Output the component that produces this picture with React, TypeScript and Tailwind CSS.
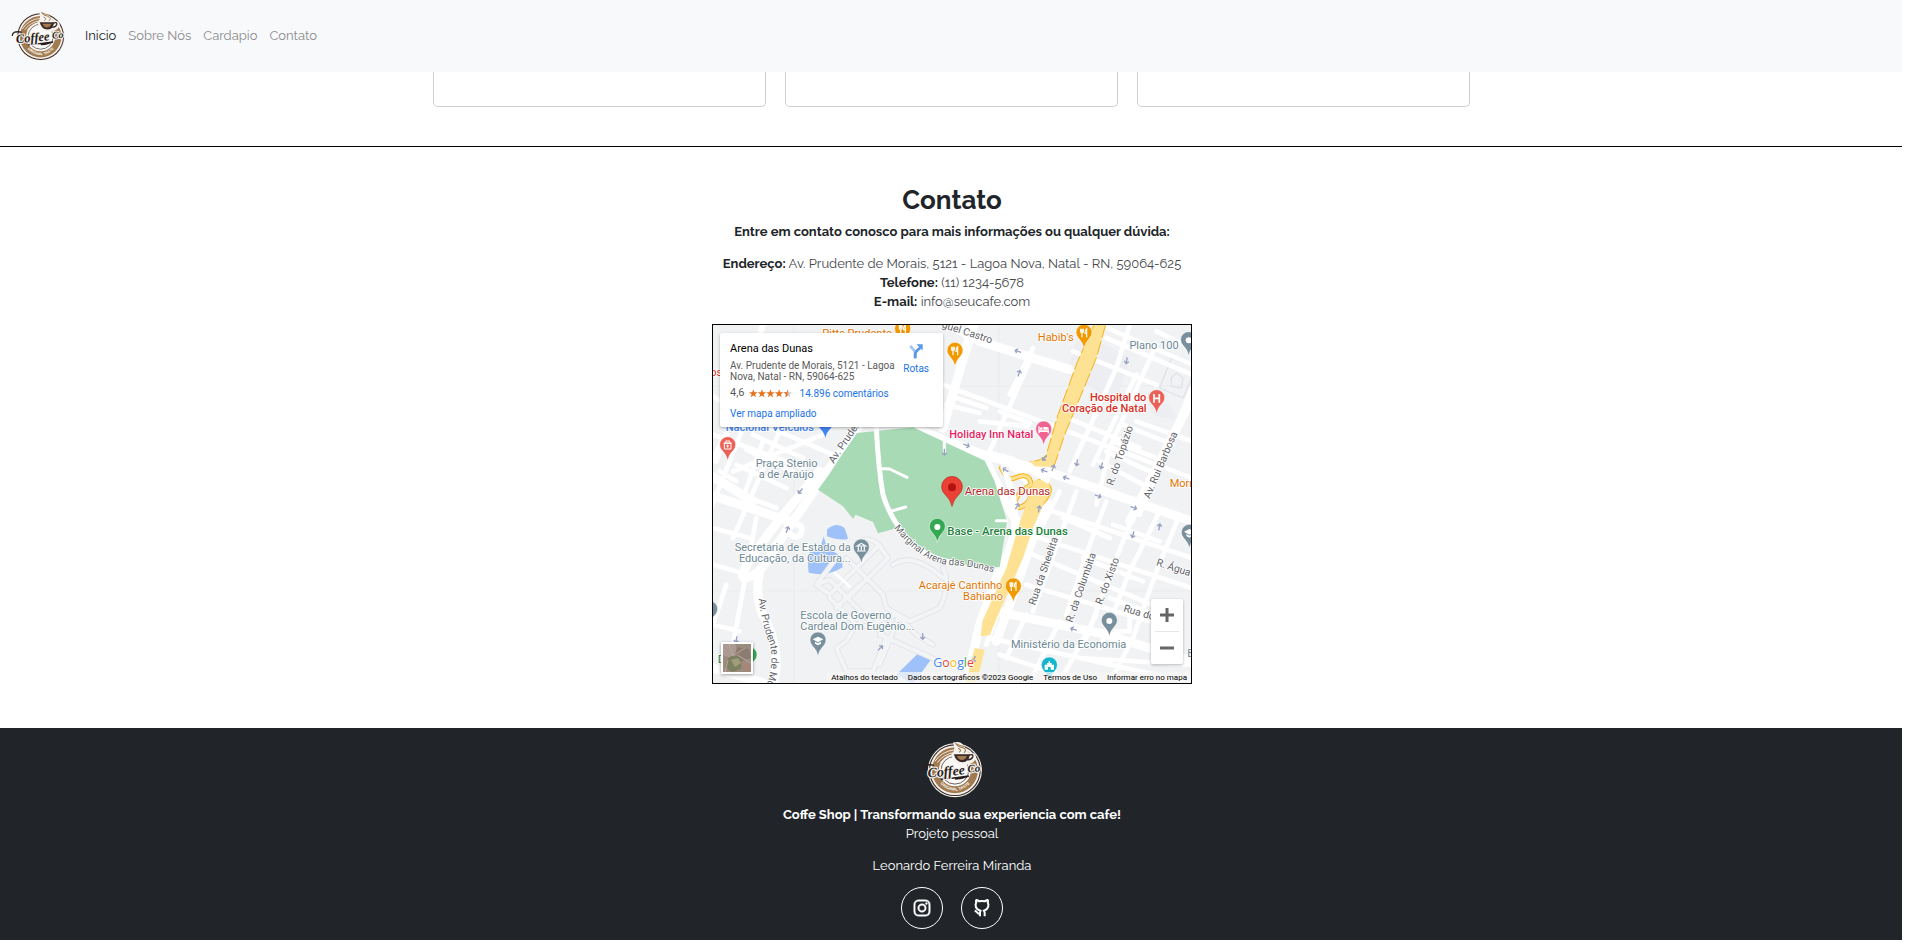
import { BiLogoInstagram } from "react-icons/bi";

const green = "#a8dab5";
const slate = "#6d8793";

function Logo({ className }: { className: string }) {
  return (
    <svg viewBox="28 30 170 156" className={className} role="img" aria-label="Coffee Co">
      <circle cx="121" cy="110" r="74" fill="#f6f3ef" />
      <circle cx="121" cy="110" r="71" fill="#3a2a26" />
      <circle cx="121" cy="110" r="68" fill="#f6f3ef" />
      <circle cx="121" cy="110" r="63" fill="#a17a50" />
      <circle cx="121" cy="110" r="44" fill="#fbfaf8" />
      <circle cx="121" cy="110" r="38" fill="none" stroke="#3a2a26" strokeWidth="2" />
      <g fill="none" stroke="#f6f3ef" strokeWidth="2.5">
        <path d="M66 86Q84 58 121 54" />
        <path d="M73 89Q89 66 121 61" />
        <path d="M80 91Q94 73 119 68" />
      </g>
      <path d="M116 34Q138 28 146 44Q152 56 160 62Q182 60 178 78Q172 92 156 94H128Q112 82 112 64Q124 58 116 34z" fill="#f6f3ef" />
      <path d="M118 66h44q-2 21-20 22-18 0-24-22z" fill="#3a2a26" />
      <path d="M126 71h28q-4 11-14 11-9 0-14-11z" fill="#a17a50" />
      <path d="M159 69q13-5 11 4-3 9-15 8" fill="none" stroke="#3a2a26" strokeWidth="4" />
      <path d="M146 62q10-9-4-14-15-3-18-11 14 8 24 8M132 61q10-5-2-11" fill="none" stroke="#a17a50" strokeWidth="3" />
      <path d="M35 106q1-14 27-10M84 135q42-4 75-9-20 8-36 8" fill="none" stroke="#2b1d1b" strokeWidth="4" strokeLinecap="round" />
      <text transform="rotate(-5 49 130)" fontFamily="'Liberation Serif', serif" fontWeight="700" fontStyle="italic" fill="#2b1d1b" stroke="#f6f3ef" strokeWidth="6" strokeLinejoin="round" paintOrder="stroke">
        <tspan x="47" y="130" fontSize="38">Coffee</tspan>
        <tspan x="157" y="126" fontSize="30">Co</tspan>
      </text>
      <path id="taste" d="M69 135q52 62 105 0" fill="none" />
      <text fontFamily="'Liberation Sans', sans-serif" fontSize="11" fontWeight="700" fill="#fff" textAnchor="middle">
        <textPath href="#taste" startOffset="50%">ORIGINAL TASTE</textPath>
      </text>
    </svg>
  );
}

function GithubIcon({ className }: { className: string }) {
  return (
    <svg viewBox="0 0 48 54" className={className} fill="none" stroke="currentColor" strokeWidth="6" strokeLinejoin="round" aria-hidden="true">
      <path d="M18 52V40Q19 36 20 35Q4 31 5 17Q5 13 7 11Q5 6 7 3Q12 4 16 7Q24 5 32 7Q36 4 41 3Q43 6 41 11Q43 13 43 17Q44 31 29 35Q32 38 32 42V52" />
      <path d="M2 35Q7 36 9 40Q12 45 18 44" />
    </svg>
  );
}

type PinProps = { x: number; y: number; color: string; kind: string };

/* x and y give the centre of the pin's head */
function Pin({ x, y, color, kind }: PinProps) {
  return (
    <g transform={`translate(${x} ${y})`}>
      <path d="M0 46Q-3 29-17 15A24 24 0 1 1 17 15Q3 29 0 46z" fill={color} stroke="#fff" strokeWidth="1.5" />
      {kind === "food" && (
        <path d="M-10-13v8q0 5 4 5v13M-6-13v10M-2-13v8q0 5-4 5M8 13V-13q-6 4-5 14h5" fill="none" stroke="#fff" strokeWidth="3.5" />
      )}
      {kind === "dot" && <circle r="9" fill="#fff" />}
      {kind === "hospital" && <path d="M-8-13v26M8-13v26M-8 0H8" stroke="#fff" strokeWidth="5" />}
      {kind === "bed" && (
        <g fill="#fff">
          <path d="M-16-10h4V2h28v9h-4V7h-24v4h-4z" />
          <circle cx="-7" cy="-3" r="4" />
          <path d="M-1-8h11q6 0 6 8H-1z" />
        </g>
      )}
      {kind === "museum" && <path d="M-13-5L0-13 13-5zM-9-3v11M0-3v11M9-3v11M-13 10h26" fill="none" stroke="#fff" strokeWidth="3.5" />}
      {kind === "school" && (
        <g fill="#fff">
          <path d="M-16-4L0-12 16-4 0 5z" />
          <path d="M-9 3L0 8 9 3v6L0 14l-9-5z" />
        </g>
      )}
      {kind === "bag" && (
        <path d="M-10-6h20v17h-20zM-12-7h24M-6-8v-5h12v5M0-2v9M-4 2h8" fill="none" stroke="#fff" strokeWidth="3" />
      )}
      {kind === "church" && (
        <path d="M-14 12V-3h7v-5h5v-6h4v6h5v5h7v15H4V4h-8v8z" fill="#fff" />
      )}
    </g>
  );
}

const minorRoads =
  "M0 215L130 290M0 330L270 430M60 440L330 330M150 300L430 420M90 310L-10 560M200 320L60 640M120 330L270 400M100 375L240 440M70 420L220 490M60 500L190 550M20 440L70 470M40 330L10 410M150 350L90 520" +
  "M130 580L60 960M0 610L110 640M0 720L120 755M0 900L80 920M40 780L0 900" +
  "M690 180L1437 460M700 240L800 265M715 215L820 250M800 290L945 305M860 260L950 295M950 110L830 380M700 280L790 0M960 70L890 210" +
  "M1160 0L1437 120M1180 40L1437 150M1080 80L1330 180M1250 0L1210 130L1070 440M1330 60L1190 370L1150 540M1270 150L1140 420M1040 270L1280 370M1230 300L1380 360M1200 350L1330 400M1180 380L1310 440M1160 410L1290 480M1270 290L1437 350M1330 20L1437 70M1437 190L1280 570" +
  "M1020 560L1437 700M1040 500L980 620M1090 500L1040 640L960 860M1180 530L1130 660L1060 870M1270 550L1210 700L1120 940M1340 560L1250 740L1160 970M1400 570L1330 740L1260 940M1050 580L1190 640M1200 600L1340 650M960 690L1340 850M940 780L1310 890M980 640L1437 790M1110 700L1290 770M1190 820L1380 890" +
  "M860 850L820 960M940 870L880 1000M1040 890L950 1074M830 940L1437 1074M860 990L1110 1074M1150 870L1040 1074M1100 1000L1437 1020M1250 960L1190 1074M1210 920L1250 920L1250 870";

const majorRoads =
  "M-10 510L230 590M-10 450L120 530M320 440Q-20 840 140 740Q120 830 165 900Q205 1000 180 1080M440 300L240 590L140 740" +
  "M780 0L690 310M600 310L810 390L1000 440L1437 590M710 0L800 50L1070 135M850 860L1180 930L1437 1010M1437 220L1250 590M0 1030L150 1074" +
  "M810 390Q870 520 910 590Q900 680 850 760L800 900L760 1074M870 400Q960 460 1000 560M1010 540Q970 600 940 700L850 950";

const campusRoads =
  "M430 660Q465 625 500 665L525 700 410 815M400 700L510 810L520 850 590 890L680 850Q715 780 690 730M310 780L350 765 510 930M370 700L310 780 350 810 500 660M350 820L430 900 400 950 370 970 400 1040H480L520 940M440 780L370 850M500 930L680 1010M560 870L500 1020M540 720Q600 680 690 760M440 910L550 870L610 930L660 960";

const loopRamps =
  "M865 430Q885 470 905 460Q950 440 955 480Q900 510 905 550Q945 550 955 510L980 470M1000 480Q1030 500 960 560";

const arrows: [number, number, number][] = [
  [915, 80, 200], [918, 146, -70], [760, 362, 20], [694, 382, 90], [878, 436, 215], [995, 400, 130], [1020, 430, -70],
  [994, 438, 200], [1060, 460, 200], [1092, 414, 100], [1166, 423, 105], [1155, 514, 20], [1262, 549, 20], [1241, 108, 100],
  [1260, 630, 105], [1339, 607, -80], [978, 553, -80], [912, 545, -60], [1082, 914, 200], [783, 1003, 115], [629, 935, 90],
  [502, 970, -45], [262, 499, 130], [223, 615, -70], [70, 945, 100],
];

function MapDrawing() {
  return (
    <svg viewBox="0 1 1434 1074" className="block h-full w-full" role="img" aria-label="Mapa da Arena das Dunas" fontFamily="Roboto, sans-serif" fontSize="33" fontWeight="400">
      <rect width="1440" height="1080" fill="#f1f2f4" />
      <path d="M242 0V1080M857 0V1080M0 184H1440M0 799H1440" stroke="#e9eaec" strokeWidth="2" />
      <path d="M1060 150L1100 20 1250 100 1210 230zM1370 240l25 45-70-10-20-45z" fill="#eceef1" />
      <g fill="#9fc1fa">
        <path d="M342 615q26-24 52-6 8 19 11 33-21 8-63-7z" />
        <path d="M332 635l8 28 45 35 4 30q-45 30-102 16-5-33 3-61l29-5z" />
        <path d="M550 1050l75-73 32 24-39 52-20 24z" />
      </g>
      <g fill="none" strokeLinejoin="round" strokeLinecap="round">
        <path d={campusRoads} stroke="#e1e3e7" strokeWidth="17" />
        <path d={campusRoads} stroke="#f3f4f6" strokeWidth="12" />
        <path d="M1375 100l60 25M1375 100l-35 90 70 30 30-70M1375 160l15-15 20 15-5 30-30-5z" stroke="#dfe2e6" strokeWidth="4" />
        <path d={minorRoads} stroke="#fff" strokeWidth="14" />
        <path d={majorRoads} stroke="#fff" strokeWidth="27" />
        <path d="M150 0L60 300M-10 420L40 330M220 600Q280 590 262 630Q240 650 222 610" stroke="#fff" strokeWidth="18" />
      </g>
      <path d="M432 325L600 308 690 350 815 408 845 470 882 590 860 728Q770 728 700 706Q650 690 590 640L545 612 495 626 480 592 428 570 420 582 390 545 315 495Q350 450 380 400z" fill={green} />
      <g fill="none" strokeLinejoin="round" strokeLinecap="round">
        <path d="M490 310Q496 430 510 510Q530 580 590 650Q650 705 730 715" stroke="#fff" strokeWidth="15" />
        <path d="M510 432L530 433 582 458M532 560L578 547M850 588H880M694 345V385M365 745L410 785" stroke="#fff" strokeWidth="9" />
        <path d={loopRamps} stroke="#f5b21a" strokeWidth="15" />
        <path d={loopRamps} stroke="#fee293" strokeWidth="9" />
      </g>
      <path d="M1143 0L1094 110 1035 270 1000 390Q985 410 950 410L965 425 1022 428 1055 330 1150 100 1178 0z" fill="#fee293" />
      <path d="M1143 0L1094 110 1035 270 1000 390Q985 410 950 410M1022 428L1055 330 1150 100 1178 0" fill="none" stroke="#f5b21a" strokeWidth="3" strokeDasharray="42 10" />
      <path d="M965 465L1012 465 1004 510 960 610 930 700 860 860 830 932 803 935 808 890 880 730 915 610 945 520zM785 970L815 975 795 1060 780 1080H757z" fill="#fee293" />
      <path d="M820 385L900 405 1010 470M870 420L900 510 910 600" fill="none" stroke="#fff" strokeWidth="18" />
      <g fill="none" stroke="#98a1c4" strokeWidth="4">
        {arrows.map(([x, y, angle]) => (
          <path key={`${x}-${y}`} transform={`translate(${x} ${y}) rotate(${angle})`} d="M-10 0H8M2-7L9 0 2 7" />
        ))}
      </g>

      <g stroke="#fff" strokeWidth="5" paintOrder="stroke" strokeLinejoin="round">
        <g fill="#5f6368" fontSize="31">
          <path id="prudente" d="M137 822Q146 900 171 960Q184 1020 155 1100" fill="none" stroke="none" />
          <path id="marginal" d="M543 610Q630 720 720 722Q780 724 850 746" fill="none" stroke="none" />
          <text><textPath href="#prudente">Av. Prudente de Morais</textPath></text>
          <text fontSize="29"><textPath href="#marginal">Marginal Arena das Dunas</textPath></text>
          <text transform="translate(362 418) rotate(-56)">Av. Prudente</text>
          <text transform="translate(685 8) rotate(18)">guel Castro</text>
          <text transform="translate(1200 484) rotate(-71)">R. do Topázio</text>
          <text transform="translate(1310 524) rotate(-67)">Av. Rui Barbosa</text>
          <text transform="translate(966 843) rotate(-71)">Rua da Sheelita</text>
          <text transform="translate(1078 895) rotate(-71)">R. da Columbita</text>
          <text transform="translate(1166 842) rotate(-69)">R. do Xisto</text>
          <text transform="translate(1328 722) rotate(18)">R. Água M</text>
          <text transform="translate(1230 860) rotate(16)">Rua do</text>
        </g>
        <g fill={slate}>
          <text x="128" y="426">Praça Stenio</text>
          <text x="137" y="459">a de Araújo</text>
          <text x="413" y="679" textAnchor="end">Secretaria de Estado da</text>
          <text x="413" y="711" textAnchor="end">Educação, da Cultura...</text>
          <text x="262" y="882">Escola de Governo</text>
          <text x="262" y="915">Cardeal Dom Eugênio...</text>
          <text x="1067" y="971" textAnchor="middle">Ministério da Economia</text>
          <text x="1397" y="72" textAnchor="end">Plano 100</text>
          <text x="1423" y="998">E</text>
        </g>
        <g fill="#e37400">
          <text x="328" y="36">Pitts Prudente</text>
          <text x="1082" y="48" textAnchor="end">Habib's</text>
          <text x="868" y="793" textAnchor="end">Acarajé Cantinho</text>
          <text x="870" y="826" textAnchor="end">Bahiano</text>
          <text x="1370" y="488">Morri</text>
        </g>
        <g fill="#d93025" fontWeight="500">
          <text x="1300" y="228" textAnchor="end">Hospital do</text>
          <text x="1301" y="262" textAnchor="end">Coração de Natal</text>
          <text x="-8" y="153" fontWeight="400">os</text>
        </g>
        <text x="755" y="511" fontSize="34" fill="#b3261e">Arena das Dunas</text>
        <text x="703" y="632" fontSize="34" fill="#188038" fontWeight="500">Base - Arena das Dunas</text>
        <text x="961" y="339" textAnchor="end" fill="#e91e63" fontWeight="500">Holiday Inn Natal</text>
        <text x="38" y="320" fill="#4285f4" fontWeight="500">Nacional Veículos</text>
        <text x="14" y="1015" fill="#188038">D</text>
      </g>

      <Pin x={569} y={14} color="#f29900" kind="food" />
      <Pin x={726} y={79} color="#f29900" kind="food" />
      <Pin x={1113} y={25} color="#f29900" kind="food" />
      <Pin x={901} y={786} color="#f29900" kind="food" />
      <Pin x={1427} y={47} color="#78909c" kind="dot" />
      <Pin x={1189} y={889} color="#78909c" kind="dot" />
      <Pin x={445} y={669} color="#78909c" kind="museum" />
      <Pin x={315} y={948} color="#78909c" kind="school" />
      <Pin x={1429} y={625} color="#78909c" kind="school" />
      <Pin x={-10} y={855} color="#78909c" kind="none" />
      <Pin x={44} y={362} color="#ec6157" kind="bag" />
      <Pin x={1331} y={221} color="#ec6157" kind="hospital" />
      <Pin x={992} y={315} color="#f06292" kind="bed" />
      <Pin x={337} y={296} color="#4285f4" kind="none" />
      <Pin x={673} y={607} color="#34a853" kind="dot" />
      <Pin x={108} y={992} color="#34a853" kind="none" />
      <Pin x={1009} y={1023} color="#12b5cb" kind="church" />
      <path d="M717 545Q713 525 697 510A31 31 0 1 1 737 510Q721 525 717 545z" fill="#ea4335" stroke="#c5221f" strokeWidth="2" />
      <circle cx="717" cy="488" r="12" fill="#b31412" />

      <g fontFamily="'Open Sans', sans-serif" fontSize="37" fontWeight="500" stroke="#fff" strokeWidth="4" paintOrder="stroke">
        <text x="661" y="1026">
          <tspan fill="#4285f4">G</tspan><tspan fill="#ea4335">o</tspan><tspan fill="#fbbc04">o</tspan><tspan fill="#4285f4">g</tspan><tspan fill="#34a853">l</tspan><tspan fill="#ea4335">e</tspan>
        </text>
      </g>
    </svg>
  );
}

function Stars() {
  const star = "M6 0l1.5 4.2H12L8.4 6.9l1.3 4.4L6 8.700l-3.700 2.600 1.300-4.400L0 4.200h4.500z";
  return (
    <svg viewBox="0 0 60 12" className="h-[9px] w-[43px]" role="img" aria-label="4,6 de 5 estrelas">
      {[0, 12, 24, 36, 48].map((x) => (
        <path key={x} d={star} transform={`translate(${x} 0)`} fill={x === 48 ? "#c9c9c9" : "#e7711b"} />
      ))}
      <path d="M54 0v8.700l-3.700 2.600 1.300-4.400L48 4.200h4.500z" fill="#e7711b" />
    </svg>
  );
}

function PlaceCard() {
  return (
    <div className="absolute top-2 left-[7px] flex h-[94px] w-[223px] justify-between rounded-xs bg-white py-[9px] pr-[14px] pl-[10px] text-left font-[Roboto,sans-serif] text-[10px] leading-[11px] text-[#5b5b5b] shadow-[0_1px_3px_rgba(0,0,0,0.3)]">
      <div>
        <h3 className="text-[11px] leading-[14px] text-black">Arena das Dunas</h3>
        <p className="mt-1 whitespace-nowrap">
          Av. Prudente de Morais, 5121 - Lagoa
          <br />
          Nova, Natal - RN, 59064-625
        </p>
        <div className="mt-1 flex items-center gap-1">
          <span className="text-[11px] leading-[14px]">4,6</span>
          <Stars />
          <a href="#comentarios" className="ml-1 text-[#1a73e8]">14.896 comentários</a>
        </div>
        <a href="#mapa" className="mt-2 block text-[#1a73e8]">Ver mapa ampliado</a>
      </div>
      <a href="#rotas" className="flex flex-col items-center gap-1 pt-[2px] text-[#1a73e8]">
        <svg viewBox="0 0 45 48" className="h-[15px] w-[14px]" aria-hidden="true">
          <path d="M4 6L20 25V46" fill="none" stroke="#a4c5f4" strokeWidth="9" />
          <path d="M20 46V32Q20 24 36 12" fill="none" stroke="#5a97e8" strokeWidth="9" />
          <path d="M24 1h20v20z" fill="#5a97e8" />
        </svg>
        Rotas
      </a>
    </div>
  );
}

function MapFrame() {
  return (
    <div id="mapa" className="relative mx-auto mt-[13px] h-[360px] w-[480px] max-w-full overflow-hidden border border-black">
      <MapDrawing />
      <PlaceCard />
      <button aria-label="Satélite" className="absolute bottom-[9px] left-2 size-8 border-2 border-white bg-[#9c8c7e] shadow-[0_1px_3px_rgba(0,0,0,0.4)]">
        <svg viewBox="0 0 28 28" className="block h-full w-full" aria-hidden="true">
          <path d="M0 0h12l3 8-8 6-7-3z" fill="#ab9a91" />
          <path d="M14 3l12 2 2 9-9 3-7-6z" fill="#8c7b70" />
          <path d="M5 14q8-6 14 2l-1 9-9 3-7-5z" fill="#7d8063" />
          <path d="M8 16l7-2 3 5-6 4z" fill="#a09d79" />
          <path d="M18 18l10 2v8h-7z" fill="#a68678" />
          <path d="M6 0l4 12 12-8M2 28l3-12M14 11l14 8" fill="none" stroke="#b6a99c" />
        </svg>
      </button>
      <div className="absolute right-2 bottom-[19px] flex w-8 flex-col items-center rounded-xs bg-white shadow-[0_1px_3px_rgba(0,0,0,0.3)]">
        <button aria-label="Aumentar o zoom" className="flex h-8 w-full items-center justify-center">
          <svg viewBox="0 0 14 14" className="size-[14px]" aria-hidden="true"><path d="M7 0v14M0 7h14" stroke="#666" strokeWidth="3" /></svg>
        </button>
        <span className="h-px w-6 bg-[#e6e6e6]" />
        <button aria-label="Diminuir o zoom" className="flex h-8 w-full items-center justify-center">
          <svg viewBox="0 0 14 14" className="size-[14px]" aria-hidden="true"><path d="M0 7h14" stroke="#666" strokeWidth="3" /></svg>
        </button>
      </div>
      <div className="absolute right-0 bottom-0 flex gap-[10px] bg-[#f5f5f5]/75 px-1 font-[Roboto,sans-serif] text-[8px] leading-[11px] text-black">
        <button>Atalhos do teclado</button>
        <span>Dados cartográficos ©2023 Google</span>
        <a href="#termos">Termos de Uso</a>
        <a href="#erro">Informar erro no mapa</a>
      </div>
    </div>
  );
}

const links = ["Sobre Nós", "Cardapio", "Contato"];

export default function App() {
  return (
    <div className="bg-white pr-[3px] font-[Raleway,Lato,sans-serif] text-[13px] leading-[19px] text-[#212529]">
      <header className="flex h-[72px] items-center bg-[#f8f9fb] pl-[10px]">
        <a href="#inicio" aria-label="Coffee Co">
          <Logo className="h-[52px] w-14" />
        </a>
        <nav className="ml-[19px] flex gap-3 pb-0.5 text-[#8b8c8e]">
          <a href="#inicio" className="text-[#212529]">Inicio</a>
          {links.map((label) => (
            <a key={label} href="#contato">{label}</a>
          ))}
        </nav>
      </header>
      <main>
        <section className="border-b border-black pb-[39px]">
          <div className="mx-auto grid max-w-[1037px] grid-cols-3 gap-[19px]">
            <div className="h-[35px] rounded-b-[5px] border border-t-0 border-[#cfcfd0]" />
            <div className="h-[35px] rounded-b-[5px] border border-t-0 border-[#cfcfd0]" />
            <div className="h-[35px] rounded-b-[5px] border border-t-0 border-[#cfcfd0]" />
          </div>
        </section>
        <section id="contato" className="pt-[37px] pb-11 pl-0.5 text-center">
          <h2 className="text-[26px] leading-[32px] font-bold">Contato</h2>
          <p className="mt-[6px] font-bold">Entre em contato conosco para mais informações ou qualquer dúvida:</p>
          <address className="mt-[13px] text-[#45494d] not-italic">
            <p><strong className="text-[#212529]">Endereço:</strong> Av. Prudente de Morais, 5121 - Lagoa Nova, Natal - RN, 59064-625</p>
            <p><strong className="text-[#212529]">Telefone:</strong> (11) 1234-5678</p>
            <p><strong className="text-[#212529]">E-mail:</strong> info@seucafe.com</p>
          </address>
          <MapFrame />
        </section>
      </main>
      <footer className="flex flex-col items-center bg-[#212529] pt-[13px] pb-[11px] pl-0.5 text-center text-white">
        <Logo className="h-[57px] w-[62px]" />
        <p className="mt-[7px] font-bold">Coffe Shop | Transformando sua experiencia com cafe!</p>
        <p>Projeto pessoal</p>
        <p className="mt-[13px]">Leonardo Ferreira Miranda</p>
        <div className="mt-3 flex gap-[18px]">
          <a href="#instagram" aria-label="Instagram" className="flex size-[42px] items-center justify-center rounded-full border border-white">
            <BiLogoInstagram className="size-[22px] stroke-current stroke-[0.5px]" />
          </a>
          <a href="#github" aria-label="GitHub" className="flex size-[42px] items-center justify-center rounded-full border border-white">
            <GithubIcon className="h-[18px] w-4" />
          </a>
        </div>
      </footer>
    </div>
  );
}
